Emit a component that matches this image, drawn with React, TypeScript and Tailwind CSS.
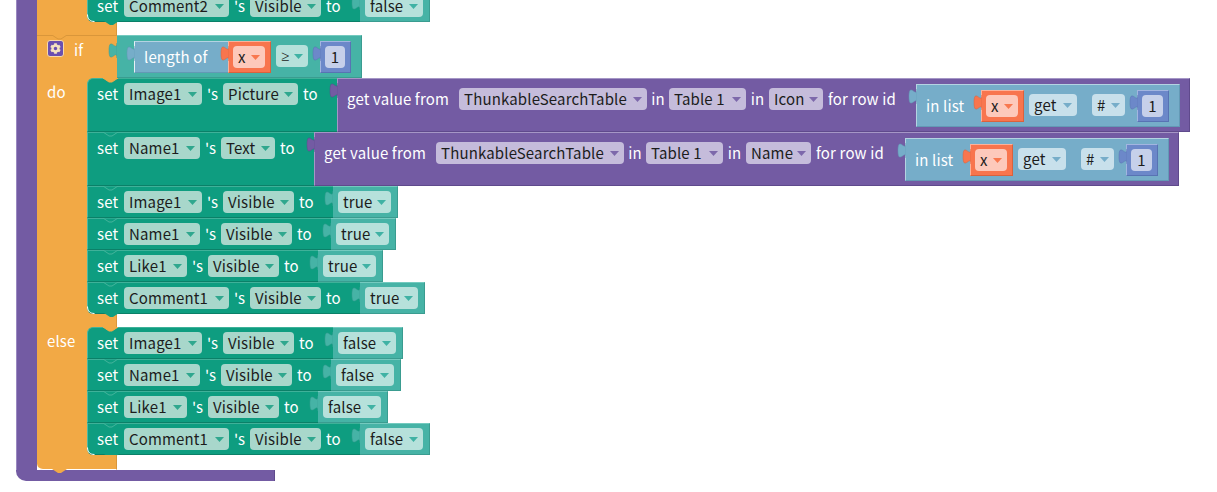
import type { ReactNode } from 'react'
import { FaCog } from 'react-icons/fa'

const FONT = { fontFamily: '"Noto Sans CJK JP", "Noto Sans", sans-serif' }

type Tone = 'green' | 'teal' | 'purple' | 'red' | 'blue' | 'num'

const PILL: Record<Tone, string> = {
  green: 'bg-[#a8d7cb]',
  teal: 'bg-[#b6e1db]',
  purple: 'bg-[#c5bcdb]',
  red: 'bg-[#fdc9bb]',
  blue: 'bg-[#c8e0eb]',
  num: 'bg-[#c6d0ea]',
}

const CARET: Record<Tone, string> = {
  green: 'fill-[#2fa78e]',
  teal: 'fill-[#3fb2a4]',
  purple: 'fill-[#7d68ab]',
  red: 'fill-[#f8784f]',
  blue: 'fill-[#76adc9]',
  num: 'fill-[#6b87c8]',
}

const TAB: Record<string, string> = {
  teal: 'fill-[#46b3a6] stroke-[#3a9c90]',
  purple: 'fill-[#735ba3] stroke-[#5f4a8c]',
  red: 'fill-[#f8754e] stroke-[#d9623d]',
  blue: 'fill-[#76adc9] stroke-[#6399b5]',
  num: 'fill-[#6c88c9] stroke-[#5873b3]',
}

function Pill({ label, w, tone, caret = true, font = '' }: { label: string; w: string; tone: Tone; caret?: boolean; font?: string }) {
  return (
    <div className={`flex h-[22px] shrink-0 items-center justify-between rounded-[4px] pb-[2px] pl-[5px] pr-[5px] text-[15px] leading-none tracking-[0.15px] text-[#1c1c1c] ${w} ${PILL[tone]}`}>
      <span className={`whitespace-nowrap ${font}`}>{label}</span>
      {caret && (
        <svg width="9" height="5" viewBox="0 0 9 5" className={`mt-[2px] ${CARET[tone]}`}>
          <path d="M0 0 H9 L4.5 5 Z" />
        </svg>
      )}
    </div>
  )
}

function Word({ text, w, center }: { text: string; w: string; center?: boolean }) {
  return (
    <div className={`flex h-[22px] shrink-0 items-center whitespace-nowrap pb-[2px] text-[15px] leading-none tracking-[0.15px] text-white ${center ? 'justify-center' : ''} ${w}`}>
      {text}
    </div>
  )
}

function Tab({ fill, top = 'top-[4px]' }: { fill: string; top?: string }) {
  return (
    <svg width="9" height="15" viewBox="0 0 9 15" className={`absolute -left-[9px] ${top} ${fill}`}>
      <path d="M9 0 C9 10 1 -8 1 7.5 C1 23 9 5 9 15 Z" strokeWidth="0.5" />
    </svg>
  )
}

function Notch({ fill, line }: { fill: string; line: string }) {
  return (
    <svg width="15" height="5" viewBox="0 0 15 5" className={`absolute left-[15px] -top-px ${fill} ${line}`}>
      <path d="M0 0 L6 4 H9 L15 0 Z" strokeWidth="1" />
    </svg>
  )
}

function Hang() {
  return (
    <svg width="15" height="5" viewBox="0 0 15 5" className="absolute -bottom-[5px] left-[16px] z-10 fill-[#0e9d80]">
      <path d="M0 0 L6 4 H9 L15 0 Z" />
    </svg>
  )
}

function Corner() {
  return (
    <svg width="8" height="8" viewBox="0 0 8 8" className="absolute -bottom-px -left-px fill-none stroke-white">
      <path d="M0.5 0.5 C0.5 5 3 7.5 7.5 7.5" strokeWidth="1" />
    </svg>
  )
}

function Var() {
  return (
    <div className="relative h-[32px] w-[43px] shrink-0 border-b border-l border-r border-t border-b-[#d9623d] border-l-[#fbb29b] border-r-[#d9623d] border-t-[#fbb29b] bg-[#f8754e] pl-[4px] pt-[4px]">
      <Tab fill={TAB.red} />
      <Pill label="x" w="w-[32px]" tone="red" />
    </div>
  )
}

function Num({ w = 'w-[32px]', pill = 'w-[21px]' }: { w?: string; pill?: string }) {
  return (
    <div className={`relative h-[32px] shrink-0 border-b border-l border-r border-t border-b-[#5873b3] border-l-[#a2b5e0] border-r-[#5873b3] border-t-[#a2b5e0] bg-[#6c88c9] pl-[4px] pt-[4px] ${w}`}>
      <Tab fill={TAB.num} />
      <div className="w-full">
        <Pill label="1" w={`${pill} justify-center`} tone="num" caret={false} />
      </div>
    </div>
  )
}

function InList() {
  return (
    <div className="relative mt-[6px] flex h-[43px] w-[264px] shrink-0 items-start border-b border-l border-r border-t border-b-[#6399b5] border-l-[#b4d3e2] border-r-[#6399b5] border-t-[#b4d3e2] bg-[#76adc9] pl-[9px] pt-[5px]">
      <Tab fill={TAB.blue} />
      <Word text="in list" w="w-[55px] mt-[5px]" />
      <Var />
      <div className="ml-[5px] mt-[4px]">
        <Pill label="get" w="w-[48px]" tone="blue" />
      </div>
      <div className="ml-[15px] mt-[4px]">
        <Pill label="#" w="w-[33px]" tone="blue" />
      </div>
      <div className="ml-[12px]">
        <Num />
      </div>
    </div>
  )
}

function GetValue({ last, lastW, endW }: { last: string; lastW: string; endW: string }) {
  return (
    <div className="relative flex h-[54px] shrink-0 items-start border-b border-l border-t border-r border-b-[#5f4a8c] border-l-[#a596c6] border-r-[#5f4a8c] border-t-[#a596c6] bg-[#735ba3] pl-[9px]">
      <Tab fill={TAB.purple} />
      <div className="mt-[9px] flex">
        <Word text="get value from" w="w-[112px]" />
        <Pill label="ThunkableSearchTable" w="w-[188px]" tone="purple" />
        <Word text="in" w="w-[22px]" center />
        <Pill label="Table 1" w="w-[77px]" tone="purple" />
        <Word text="in" w="w-[23px]" center />
        <Pill label={last} w={lastW} tone="purple" />
        <Word text="for row id" w={`${endW} pl-[5px]`} />
      </div>
      <div className="-mt-[1px] mr-[9px]">
        <InList />
      </div>
    </div>
  )
}

function Value({ label }: { label: string }) {
  const isTrue = label === 'true'
  return (
    <div className="relative h-[32px] shrink-0 border-b border-r border-t border-b-[#3a9c90] border-r-[#3a9c90] border-t-[#74cabf] bg-[#46b3a6] pl-[5px] pr-[6px] pt-[4px]">
      <Tab fill={TAB.teal} />
      <Pill label={label} w={isTrue ? 'w-[53px]' : 'w-[58px]'} tone="teal" />
    </div>
  )
}

interface SetRowProps {
  target: string
  targetW: string
  prop: string
  propW: string
  tall?: boolean
  first?: boolean
  last?: boolean
  notch?: 'orange' | 'line' | 'none'
  children: ReactNode
}

function SetRow({ target, targetW, prop, propW, tall, first, last, notch = 'line', children }: SetRowProps) {
  return (
    <div className="flex items-start">
      <div
        className={`relative flex w-max shrink-0 items-start border-b border-l border-t border-b-[#0b8068] border-l-[#4fb9a2] border-t-[#3fb199] bg-[#0e9d80] pl-[9px] pt-[4px] ${tall ? 'h-[54px]' : 'h-[32px]'} ${first ? 'rounded-tl-[6px]' : ''} ${last ? 'rounded-bl-[6px]' : ''}`}
      >
        {notch === 'orange' && <Notch fill="fill-[#f2a945]" line="stroke-[#f2a945]" />}
        {notch === 'line' && <Notch fill="fill-[#0e9d80]" line="stroke-[#45b39b]" />}
        {last && <Hang />}
        {last && <Corner />}
        <Word text="set" w="w-[27px]" />
        <Pill label={target} w={targetW} tone="green" />
        <Word text="'s" w="w-[21px]" center />
        <Pill label={prop} w={propW} tone="green" />
        <Word text="to" w="w-[39px] pl-[5px]" />
      </div>
      {children}
    </div>
  )
}

function Footer({ h }: { h: string }) {
  return <div className={`w-[80px] bg-[#f2a945] border-r border-r-[#d9963a] ${h}`} />
}

function Label({ text }: { text: string }) {
  return <div className="pl-[10px] pt-[3px] text-[15px] leading-[22px] tracking-[0.15px] text-white">{text}</div>
}

export default function App() {
  return (
    <div className="h-[492px] w-[1217px] overflow-hidden bg-white" style={FONT}>
      <div className="ml-[16px] w-max">
        <div className="flex">
          <div className="w-[21px] bg-[#735ba3] border-l border-l-[#9a88c0]" />
          <div className="flex flex-col">
            {/* previous statement, cut by the top of the view */}
            <div className="flex h-[22px] items-end">
              <div className="h-full w-[56px] bg-[#f2a945]" />
              <div className="relative z-10 -ml-[6px] flex h-[22px] flex-col justify-end">
                <SetRow target="Comment2" targetW="w-[105px]" prop="Visible" propW="w-[71px]" last notch="none">
                  <Value label="false" />
                </SetRow>
              </div>
            </div>
            <Footer h="h-[13px]" />

            {/* if */}
            <div className="flex h-[43px] items-start">
              <div className="relative h-[43px] w-[80px] border-t border-t-[#d9963a] bg-[#f2a945]">
                <svg width="15" height="5" viewBox="0 0 15 5" className="absolute left-[15px] -top-px fill-[#f2a945] stroke-[#d9963a]">
                  <path d="M0 0 L6 4 H9 L15 0" />
                </svg>
                <div className="absolute left-[10px] top-[4px] flex h-[17px] w-[17px] items-center justify-center rounded-[3px] border border-[#f7d9a8] bg-[#6a4fb0]">
                  <FaCog size={11} className="text-[#f5e3c0]" />
                </div>
                <div className="absolute left-[37px] top-[3px] text-[15px] leading-[22px] text-white">if</div>
              </div>
              <div className="relative flex h-[43px] items-start border-b border-r border-t border-b-[#3a9c90] border-r-[#3a9c90] border-t-[#74cabf] bg-[#46b3a6] pl-[17px] pr-[10px] pt-[5px]">
                <Tab fill={TAB.teal} top="top-[7px]" />
                <div className="relative h-[32px] w-[94px] border-b border-l border-t border-b-[#6399b5] border-l-[#e6f1f6] border-t-[#b4d3e2] bg-[#76adc9] pl-[9px] pt-[4px]">
                  <Tab fill={TAB.blue} />
                  <Word text="length of" w="w-[80px]" />
                </div>
                <Var />
                <div className="ml-[5px] mt-[4px]">
                  <Pill label="≥" w="w-[32px]" tone="teal" font="font-['Noto_Sans']" />
                </div>
                <div className="ml-[12px]">
                  <Num w="w-[31px]" pill="w-[20px]" />
                </div>
              </div>
            </div>

            {/* do */}
            <div className="flex">
              <div className="w-[56px] bg-[#f2a945]">
                <Label text="do" />
              </div>
              <div className="relative -ml-[6px] flex flex-col">
                <SetRow target="Image1" targetW="w-[78px]" prop="Picture" propW="w-[75px]" tall first notch="orange">
                  <GetValue last="Icon" lastW="w-[54px]" endW="w-[93px]" />
                </SetRow>
                <SetRow target="Name1" targetW="w-[76px]" prop="Text" propW="w-[54px]" tall>
                  <GetValue last="Name" lastW="w-[65px]" endW="w-[94px]" />
                </SetRow>
                <SetRow target="Image1" targetW="w-[78px]" prop="Visible" propW="w-[71px]">
                  <Value label="true" />
                </SetRow>
                <SetRow target="Name1" targetW="w-[76px]" prop="Visible" propW="w-[71px]">
                  <Value label="true" />
                </SetRow>
                <SetRow target="Like1" targetW="w-[63px]" prop="Visible" propW="w-[71px]">
                  <Value label="true" />
                </SetRow>
                <SetRow target="Comment1" targetW="w-[105px]" prop="Visible" propW="w-[71px]" last>
                  <Value label="true" />
                </SetRow>
              </div>
            </div>
            <Footer h="h-[13px]" />

            {/* else */}
            <div className="flex">
              <div className="w-[56px] bg-[#f2a945]">
                <Label text="else" />
              </div>
              <div className="relative -ml-[6px] flex flex-col">
                <SetRow target="Image1" targetW="w-[78px]" prop="Visible" propW="w-[71px]" first notch="orange">
                  <Value label="false" />
                </SetRow>
                <SetRow target="Name1" targetW="w-[76px]" prop="Visible" propW="w-[71px]">
                  <Value label="false" />
                </SetRow>
                <SetRow target="Like1" targetW="w-[63px]" prop="Visible" propW="w-[71px]">
                  <Value label="false" />
                </SetRow>
                <SetRow target="Comment1" targetW="w-[105px]" prop="Visible" propW="w-[71px]" last>
                  <Value label="false" />
                </SetRow>
              </div>
            </div>
            <div className="relative z-10 h-[15px] w-[80px] rounded-bl-[6px] border-b border-r border-b-white border-r-[#d9963a] bg-[#f2a945]">
              <svg width="15" height="5" viewBox="0 0 15 5" className="absolute -bottom-[5px] left-[15px] fill-[#f2a945]">
                <path d="M0 0 L6 4 H9 L15 0 Z" />
              </svg>
            </div>
          </div>
        </div>
        <div className="h-[11px] w-[259px] rounded-bl-[10px] border-r border-r-[#5f4a8c] bg-[#735ba3]" />
      </div>
    </div>
  )
}
